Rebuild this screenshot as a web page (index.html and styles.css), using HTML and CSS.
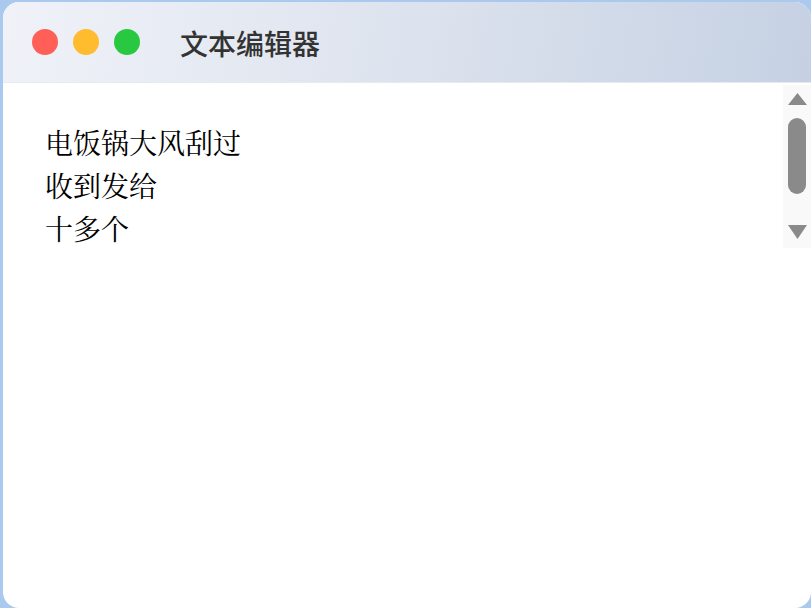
FILE: index.html
```html
<!DOCTYPE html>
<html lang="zh-CN">
<head>
    <meta charset="UTF-8">
    <meta name="viewport" content="width=device-width, initial-scale=1.0">
    <title>文本编辑器</title>
    <link rel="stylesheet" href="styles.css">
</head>
<body>
    <div class="window">
        <div class="titlebar">
            <div class="lights">
                <span class="light red"></span>
                <span class="light yellow"></span>
                <span class="light green"></span>
            </div>
            <h1 class="title">文本编辑器</h1>
        </div>

        <div class="editor">
            <div class="editor-text">电饭锅大风刮过
收到发给
十多个</div>
            <div class="scrollbar">
                <svg class="arrow" width="19" height="12" viewBox="0 0 19 12"><path d="M9.5 0 L19 12 L0 12 Z" fill="#8a8a8a"/></svg>
                <div class="thumb"></div>
                <div class="spacer"></div>
                <svg class="arrow" width="19" height="14" viewBox="0 0 19 14"><path d="M0 0 L19 0 L9.5 14 Z" fill="#8a8a8a"/></svg>
            </div>
        </div>
    </div>
</body>
</html>
```

FILE: styles.css
```css
* {
    margin: 0;
    padding: 0;
    box-sizing: border-box;
}
html, body {
    height: 100%;
    overflow: hidden;
}
body {
    background-color: #a9c9ee;
    padding: 2px 0 0 3px;
    font-family: "Noto Sans CJK SC", "Noto Sans", sans-serif;
}
.window {
    width: 808px;
    height: 606px;
    background-color: #fff;
    border-radius: 16px;
    overflow: hidden;
}
.titlebar {
    height: 81px;
    display: flex;
    align-items: center;
    padding-left: 29px;
    background: linear-gradient(100deg, #f0f2f8 0%, #dde3ee 50%, #c5d1e3 100%);
    border-bottom: 1px solid #e6eaf1;
}
.lights {
    display: flex;
    gap: 15px;
}
.light {
    width: 26px;
    height: 26px;
    border-radius: 50%;
}
.red { background-color: #ff5f57; }
.yellow { background-color: #febc2e; }
.green { background-color: #28c840; }
.title {
    margin-left: 40px;
    font-size: 28px;
    font-weight: 500;
    color: #333;
    margin-top: 2px;
}
.editor {
    display: flex;
    height: 165px;
}
.editor-text {
    flex: 1;
    padding: 38px 0 0 42px;
    font-family: "Noto Serif CJK SC", "AR PL UMing CN", "AR PL SungtiL GB", "WenQuanYi Zen Hei", SimSun, serif;
    font-size: 28px;
    line-height: 43px;
    color: #000;
    white-space: pre-line;
}
.scrollbar {
    width: 28px;
    margin-top: 2px;
    padding: 8px 0 9px 5px;
    background-color: #f9f9f9;
    display: flex;
    flex-direction: column;
    align-items: flex-start;
}
.thumb {
    width: 18px;
    height: 76px;
    margin-top: 13px;
    border-radius: 9px;
    background-color: #8a8a8a;
}
.spacer {
    flex: 1;
}
```
